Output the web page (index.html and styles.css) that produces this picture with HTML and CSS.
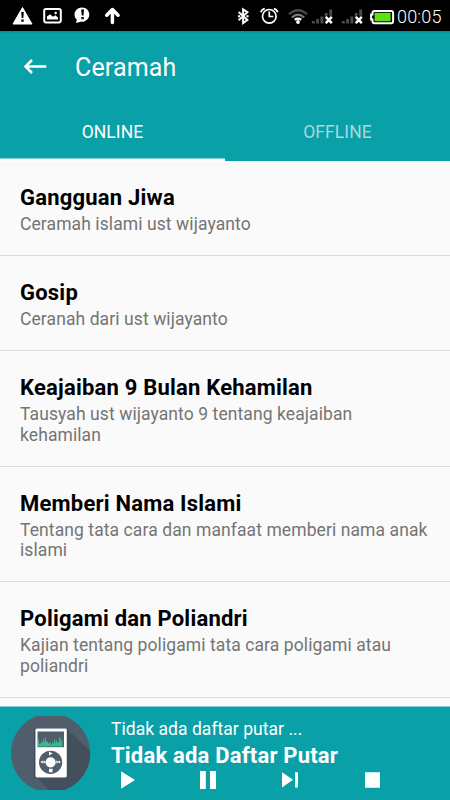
FILE: index.html
```html
<!DOCTYPE html>
<html lang="id">
<head>
<meta charset="utf-8">
<title>Ceramah</title>
<link rel="stylesheet" href="styles.css">
</head>
<body>
<div class="app">
  <div class="status">
    <svg class="status-icons" width="122" height="31" viewBox="0 0 122 31">
      <path d="M22.5 7.5L32 24H13z" fill="#fff" stroke="#fff" stroke-linejoin="round"/>
      <path d="M21.2 12h2.6l-.5 6h-1.6zM21.3 19.5h2.4v2.3h-2.4z" fill="#000"/>
      <rect x="44.2" y="9" width="16.6" height="13.4" rx="1.8" fill="none" stroke="#fff" stroke-width="2"/>
      <path d="M47 19.5v-3l3-2.3 3 2.5 2.2-1.5 2.8 2.3v2z" fill="#fff"/><circle cx="55.7" cy="13" r="1.2" fill="#fff"/>
      <path d="M76 23l.8-3.2a7.4 7.2 0 1 1 4 1.9z" fill="#fff"/>
      <path d="M81.2 9.5h2.8l-.5 6h-1.8zM81.4 17h2.4v2.3h-2.4z" fill="#000"/>
      <path d="M112.4 22.5V10M106.7 15.2l5.7-5.7 5.7 5.7" fill="none" stroke="#fff" stroke-width="3.5" stroke-linecap="round" stroke-linejoin="round"/>
    </svg>
    <svg class="status-icons" width="162" height="31" viewBox="234 0 162 31">
      <path d="M238.6 12l8.8 8-4.3 3V9.4l4.3 2.8-8.8 8" fill="none" stroke="#fff" stroke-width="2"/>
      <path d="M238 15.2h2.2v2H238zM246.4 15.2h2.2v2h-2.2z" fill="#fff"/>
      <g fill="none" stroke="#fff" stroke-width="1.7"><circle cx="269.3" cy="16.3" r="6.8"/><path d="M269.3 11.5v5h4M260.8 12.2q1.2-3 4-3.5M277.8 12.2q-1.2-3-4-3.5"/></g>
      <g fill="none" stroke-width="2.3"><path d="M289 14.2q9-8 18 0" stroke="#484848"/><path d="M291.8 17.5q6.2-5.5 12.4 0" stroke="#777"/><path d="M294.7 19.8q3.3-2.4 6.6 0" stroke="#fff"/></g>
      <circle cx="298" cy="22" r="1.9" fill="#fff"/>
      <g id="signal"><g stroke="#4b4b4b" stroke-width="2.9"><path d="M313.4 21v2.6M317.6 19v4.6M321.9 16.5v7.1M326.2 13v10.6M330.7 9.5v14.1"/></g><path d="M325.8 16.8l6 6.4M331.8 16.8l-6 6.4" stroke="#000" stroke-width="4.4"/><path d="M325.8 16.8l6 6.4M331.8 16.8l-6 6.4" stroke="#fff" stroke-width="2.5"/></g>
      <use href="#signal" x="30"/>
      <path d="M374.5 11h16.6a2 2 0 0 1 2 2v8.2a2 2 0 0 1-2 2h-16.6a2 2 0 0 1-2-2v-1.6h-1.4v-5h1.4V13a2 2 0 0 1 2-2z" fill="#000" stroke="#fff" stroke-width="2"/>
      <path d="M374.6 12.8h16v8.5h-16z" fill="#63e012"/>
    </svg>
    <span class="clock">00:05</span>
  </div>
  <header class="header">
    <div class="toolbar">
      <svg width="24" height="16" viewBox="0 0 24 16"><path d="M23.3 7.5H2.5M9 1L2.5 7.5 9 14" fill="none" stroke="#fff" stroke-width="2.5"/></svg>
      <h1>Ceramah</h1>
    </div>
    <nav class="tabs"><div class="tab active"><span>ONLINE</span></div><div class="tab"><span>OFFLINE</span></div></nav>
  </header>
  <main class="list">
    <article class="item"><h2>Gangguan Jiwa</h2><p>Ceramah islami ust wijayanto</p></article>
    <article class="item"><h2>Gosip</h2><p>Ceranah dari ust wijayanto</p></article>
    <article class="item"><h2>Keajaiban 9 Bulan Kehamilan</h2><p>Tausyah ust wijayanto 9 tentang keajaiban<br>kehamilan</p></article>
    <article class="item"><h2>Memberi Nama Islami</h2><p>Tentang tata cara dan manfaat memberi nama anak<br>islami</p></article>
    <article class="item"><h2>Poligami dan Poliandri</h2><p>Kajian tentang poligami tata cara poligami atau<br>poliandri</p></article>
  </main>
  <footer class="player">
    <svg class="art" width="80" height="74" viewBox="11 716 80 74">
      <defs><clipPath id="disc"><circle cx="50.6" cy="753" r="39.6"/></clipPath></defs>
      <g clip-path="url(#disc)"><path d="M11 716h80v74H11z" fill="#505d6b"/><path d="M67 729l24 23v38H49l-13-13z" fill="#444f5c"/></g>
      <rect x="34.3" y="728" width="33" height="50" rx="1.5" fill="#304251"/>
      <rect x="35.4" y="728.4" width="31.4" height="49" rx="1.3" fill="#fff"/>
      <path d="M37.5 731.5h26.5v15.7H37.5z" fill="#505d6b"/>
      <path d="M38 746.5v-7h1v4h2v-2h1v1h1v-4h1v3h1v-4h1v4h2v2h1v-1h2v2h1v-2h1v1h1v-4h1v3h1v-2h1v2h2v-5h1.5v5h1v-3h1v7z" fill="#37b990"/>
      <circle cx="50.6" cy="762.3" r="11.6" fill="#505d6b"/><circle cx="50.6" cy="762.3" r="5.1" fill="#fff"/>
      <path d="M49 751.6l3.5 2-3.5 2zM49 768.8h3.5v3.5H49zM40.3 762l2.4-1.5v3zM42.7 762l2.3-1.5v3zM61 762l-2.4-1.5v3zM58.6 762l-2.3-1.5v3z" fill="#fff"/>
    </svg>
    <div class="info">
      <p class="hint">Tidak ada daftar putar ...</p>
      <p class="now">Tidak ada Daftar Putar</p>
      <svg class="controls" width="290" height="20" viewBox="111 770 290 20" fill="#fff">
        <path d="M121 771.2l14 8.8-14 8.8zM200 771h5.8v18H200zM210 771h6v18h-6zM282 772.3l11 7.5-11 7.8zM295 772.3h3v15.3h-3zM365 772.3h15v15.5h-15z"/>
      </svg>
    </div>
  </footer>
</div>
</body>
</html>
```
FILE: styles.css
```css
* { box-sizing: border-box; margin: 0; padding: 0; }
body { width: 450px; height: 800px; overflow: hidden; font-family: Roboto, sans-serif; background: #fafafa; }
.app { height: 800px; display: flex; flex-direction: column; }
.status { height: 31px; flex: none; display: flex; background: #000; color: #fff; }
.status-icons { flex: none; }
.status-icons + .status-icons { margin-left: 112px; }
.clock { margin-left: 1px; font-size: 18px; font-weight: 300; line-height: 34px; letter-spacing: .2px; }
.header { height: 130px; flex: none; background: #0aa0a8; color: #fff; background-image: linear-gradient(#078b93, #0aa0a8 3px); }
.toolbar { height: 72px; display: flex; align-items: center; padding-left: 23px; }
h1 { margin-left: 28px; font-size: 25px; font-weight: 400; letter-spacing: .15px; line-height: 30px; padding-top: 1px; }
.tabs { height: 58px; display: grid; grid-template-columns: 1fr 1fr; grid-template-rows: 58px; }
.tab { display: flex; justify-content: center; color: #a5dadd; font-size: 17.5px; line-height: 58px; letter-spacing: .1px; }
.tab.active { color: #fff; box-shadow: inset 0 -2px #fff, inset 0 -3px #84d0d4; }
.list { flex: 1; overflow: hidden; }
.item { padding: 23px 20px 20.4px; border-bottom: 1px solid #dcdcdc; }
.item h2 { color: #000; font-size: 22px; font-weight: 700; line-height: 28px; letter-spacing: .21px; white-space: nowrap; }
.item p { color: #747474; font-size: 17.5px; line-height: 20.6px; letter-spacing: .09px; margin-top: 2px; white-space: nowrap; }
.player { height: 94px; flex: none; display: flex; background: #0aa0a8; color: #fff; padding: 10px 0 0 11px; box-shadow: inset 0 1px #84c9cd; }
.info { margin-left: 20px; }
.hint { font-size: 17.5px; line-height: 26px; letter-spacing: .04px; }
.now { font-size: 22px; font-weight: 700; line-height: 28px; letter-spacing: .2px; }
.controls { display: block; }
```
